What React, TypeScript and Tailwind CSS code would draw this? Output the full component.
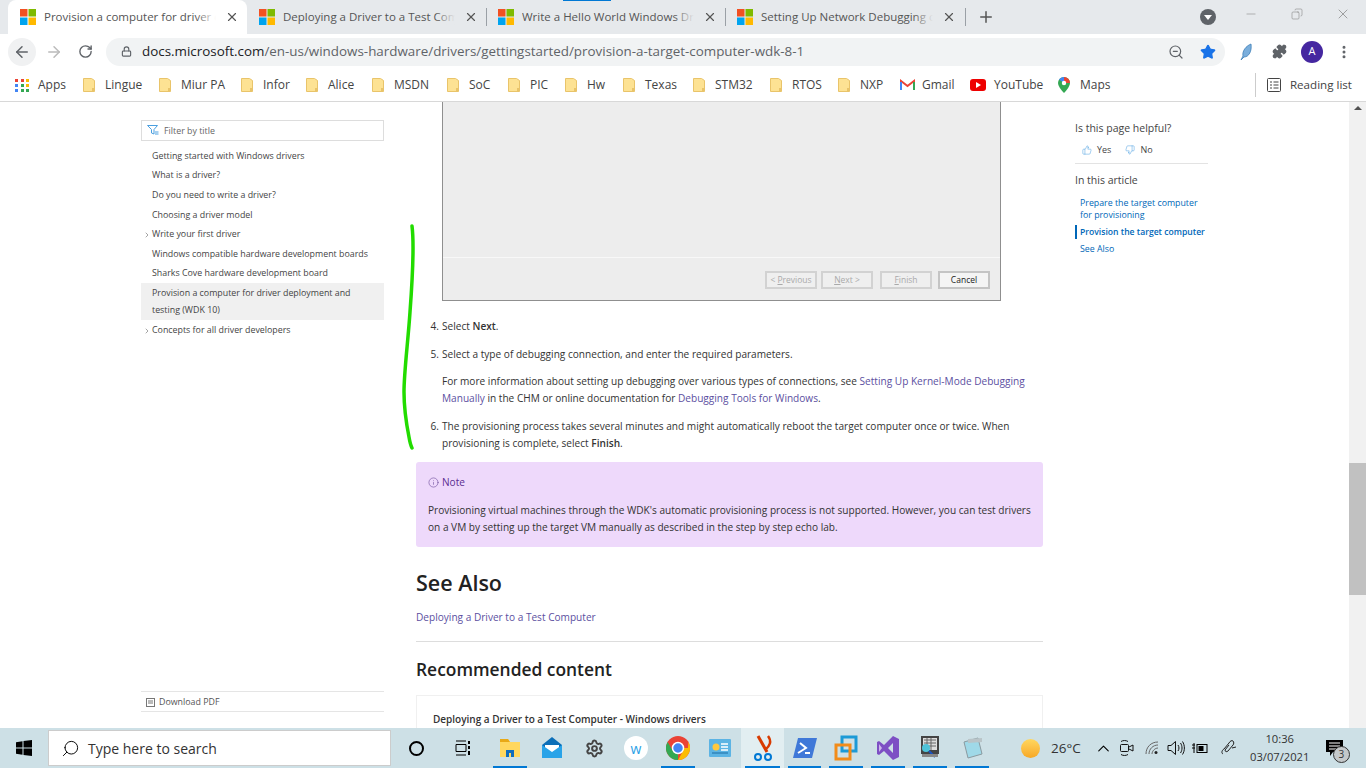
import { ArrowLeft, ArrowRight, RotateCw, Lock, ZoomOut, Star, Puzzle, MoreVertical, Plus, X, Minus, Copy, ChevronRight, ThumbsUp, ThumbsDown, Info, ChevronUp, Search, Settings } from "lucide-react";

const MsLogo = () => (
  <svg width="16" height="16" viewBox="0 0 16 16" className="shrink-0">
    <rect x="0" y="0" width="7.5" height="7.5" fill="#f25022" />
    <rect x="8.5" y="0" width="7.5" height="7.5" fill="#7fba00" />
    <rect x="0" y="8.5" width="7.5" height="7.5" fill="#00a4ef" />
    <rect x="8.5" y="8.5" width="7.5" height="7.5" fill="#ffb900" />
  </svg>
);

const Folder = () => (
  <svg width="12" height="14" viewBox="0 0 12 14" className="shrink-0">
    <path d="M0.5 0.5h8l3 2v11h-11z" fill="#fde293" stroke="#e9c46a" />
    <rect x="9" y="10" width="2" height="3" fill="#e9c46a" />
  </svg>
);

const tabs = [
  { title: "Provision a computer for driver d", active: true },
  { title: "Deploying a Driver to a Test Com", active: false, sep: false },
  { title: "Write a Hello World Windows Dri", active: false, sep: true },
  { title: "Setting Up Network Debugging c", active: false, sep: true },
];

const bookmarks = [
  ["Lingue", "w-[76px]"],
  ["Miur PA", "w-[82px]"],
  ["Infor", "w-[65px]"],
  ["Alice", "w-[66px]"],
  ["MSDN", "w-[75px]"],
  ["SoC", "w-[61px]"],
  ["PIC", "w-[57px]"],
  ["Hw", "w-[58px]"],
  ["Texas", "w-[70px]"],
  ["STM32", "w-[77px]"],
  ["RTOS", "w-[68px]"],
  ["NXP", "w-[62px]"],
];

const navItems = [
  { t: "Getting started with Windows drivers", cls: "h-[19px] mt-[6px]" },
  { t: "What is a driver?", cls: "h-[20px]" },
  { t: "Do you need to write a driver?", cls: "h-[20px]" },
  { t: "Choosing a driver model", cls: "h-[19px]" },
  { t: "Write your first driver", cls: "h-[20px]", arrow: true },
  { t: "Windows compatible hardware development boards", cls: "h-[20px]" },
  { t: "Sharks Cove hardware development board", cls: "h-[18px]" },
];

const Step = ({ n, children }: { n?: number; children: React.ReactNode }) => (
  <div className="flex">
    <span className="w-[26px] pr-[3px] text-right shrink-0">{n ? `${n}.` : ""}</span>
    <div className="w-[596px]">{children}</div>
  </div>
);

const DlgButton = ({ children, on, cls }: { children: React.ReactNode; on?: boolean; cls: string }) => (
  <div className={`h-[18px] w-[52px] border-2 flex items-center justify-center text-[8.5px] ${on ? "border-[#c4c4c4] bg-[#f4f4f4] text-[#222]" : "border-[#d2d2d2] bg-[#efefef] text-[#aaa]"} ${cls}`}>
    {children}
  </div>
);

const TrayIcon = ({ children, w = "w-[42px]", bar, cls = "" }: { children: React.ReactNode; w?: string; bar?: boolean; cls?: string }) => (
  <div className={`${w} h-full relative flex items-center justify-center shrink-0 ${cls}`}>
    {children}
    {bar && <div className="absolute bottom-0 left-[4px] right-[4px] h-[2px] bg-[#0078d4]" />}
  </div>
);

export default function App() {
  return (
    <div className="w-[1366px] h-[768px] flex flex-col overflow-hidden relative bg-white font-['Open_Sans',sans-serif] text-[#333]">
      {/* tab strip */}
      <div className="h-[34px] bg-[#e6e9ec] flex items-end pl-[8px] shrink-0 relative">
        <div className="absolute top-0 left-[563px] w-[48px] h-[1px] bg-[#0078d4]" />
        {tabs.map((tab) => (
          <div key={tab.title} className={`w-[239px] h-[34px] flex items-center pl-[12px] pr-[8px] relative shrink-0 ${tab.active ? "bg-white rounded-t-lg" : ""}`}>
            <MsLogo />
            <span className="ml-[8px] relative text-[11.5px] text-[#555] w-[172px] h-[16px] leading-[16px] overflow-hidden whitespace-nowrap">
              {tab.title}
              <span className={`absolute top-0 right-0 h-full w-[20px] bg-gradient-to-r from-transparent ${tab.active ? "to-white" : "to-[#e6e9ec]"}`} />
            </span>
            <X size={14} strokeWidth={2} className="text-[#555] ml-auto" />
            {tab.sep && <div className="absolute left-0 top-[8px] h-[18px] w-px bg-[#9aa0a6]" />}
          </div>
        ))}
        <div className="h-[34px] flex items-center pl-px">
          <div className="h-[18px] w-px bg-[#9aa0a6]" />
          <Plus size={18} strokeWidth={2} className="text-[#555] ml-[11px]" />
        </div>
        <div className="ml-auto flex items-center h-[34px]">
          <div className="w-[16px] h-[16px] rounded-full bg-[#5f6368] flex items-center justify-center mr-[28px]">
            <div className="w-0 h-0 border-l-[4px] border-r-[4px] border-t-[5px] border-l-transparent border-r-transparent border-t-white" />
          </div>
          <Minus size={14} strokeWidth={1} className="text-[#888] mr-[33px] mb-[6px]" />
          <Copy size={12} strokeWidth={1} className="text-[#777] mr-[32px] mb-[6px] -scale-x-100" />
          <X size={16} strokeWidth={1} className="text-[#777] mr-[15px] mb-[6px]" />
        </div>
      </div>

      {/* toolbar */}
      <div className="h-[35px] bg-white flex items-center shrink-0 pl-[8px]">
        <div className="w-[28px] h-[28px] rounded-full bg-[#f0f1f2] flex items-center justify-center">
          <ArrowLeft size={18} strokeWidth={2} className="text-[#5f6368]" />
        </div>
        <ArrowRight size={18} strokeWidth={2} className="text-[#bbb] ml-[9px]" />
        <RotateCw size={15} strokeWidth={2.2} className="text-[#5f6368] ml-[15px]" />
        <div className="ml-[13px] w-[1119px] h-[28px] rounded-full bg-[#f1f3f4] flex items-center pl-[15px] pr-[9px]">
          <Lock size={11} strokeWidth={2.5} className="text-[#5f6368]" />
          <span className="ml-[10px] text-[13.4px] text-[#202124] whitespace-nowrap">
            docs.microsoft.com<span className="text-[#5f6368]">/en-us/windows-hardware/drivers/gettingstarted/provision-a-target-computer-wdk-8-1</span>
          </span>
          <ZoomOut size={16} strokeWidth={1.8} className="text-[#5f6368] ml-auto" />
          <Star size={16} fill="#1a73e8" strokeWidth={2} className="text-[#1a73e8] ml-[16px]" />
        </div>
        <svg width="14" height="18" viewBox="0 0 14 18" className="ml-[15px]">
          <path d="M11 1C6 3 2 8 3 13l-2 4 3-3c5 0 8-6 7-13z" fill="#7aaedc" stroke="#3d7fb8" strokeWidth="0.8" />
        </svg>
        <Puzzle size={15} fill="#5f6368" className="text-[#5f6368] ml-[18px]" />
        <div className="ml-[14px] w-[22px] h-[22px] rounded-full bg-[#4527a0] text-white text-[11px] flex items-center justify-center">A</div>
        <MoreVertical size={16} strokeWidth={2.5} className="text-[#5f6368] ml-[13px]" />
      </div>

      {/* bookmarks */}
      <div className="h-[33px] bg-white flex items-center shrink-0 border-b border-[#d8d8d8] text-[12px] text-[#444]">
        <div className="w-[15px] ml-[15px] grid grid-cols-3 gap-[2px] shrink-0">
          {["#ea4335", "#ea4335", "#fbbc04", "#4285f4", "#34a853", "#fbbc04", "#4285f4", "#34a853", "#34a853"].map((c, i) => (
            <div key={i} className="w-[3px] h-[3px]" style={{ backgroundColor: c }} />
          ))}
        </div>
        <span className="ml-[8px] w-[45px] shrink-0">Apps</span>
        <div className="flex">
          {bookmarks.map(([b, w]) => (
            <div key={b} className={`${w} flex items-center shrink-0`}>
              <Folder />
              <span className="ml-[10px]">{b}</span>
            </div>
          ))}
        </div>
        <div className="flex items-center shrink-0">
          <svg width="15" height="12" viewBox="0 0 15 12">
            <path d="M1 11V2l6.5 5L14 2v9" fill="none" stroke="#ea4335" strokeWidth="2" />
            <path d="M1 11V3" stroke="#4285f4" strokeWidth="2" />
            <path d="M14 11V3" stroke="#34a853" strokeWidth="2" />
          </svg>
          <span className="ml-[7px] w-[38px]">Gmail</span>
          <div className="ml-[10px] w-[16px] h-[12px] rounded-[3px] bg-[#e00] flex items-center justify-center">
            <div className="w-0 h-0 border-l-[5px] border-t-[3px] border-b-[3px] border-l-white border-t-transparent border-b-transparent" />
          </div>
          <span className="ml-[8px] w-[48px]">YouTube</span>
          <svg width="12" height="16" viewBox="0 0 12 16" className="ml-[16px]">
            <path d="M6 0a6 6 0 0 1 6 6c0 4-6 10-6 10S0 10 0 6a6 6 0 0 1 6-6z" fill="#34a853" />
            <path d="M1 2.5A6 6 0 0 1 6 0v6z" fill="#4285f4" />
            <path d="M6 0a6 6 0 0 1 6 6H6z" fill="#ea4335" />
            <circle cx="6" cy="6" r="2.2" fill="#fff" />
          </svg>
          <span className="ml-[10px]">Maps</span>
        </div>
        <div className="ml-auto flex items-center mr-[14px]">
          <div className="w-px h-[24px] bg-[#ccc] mr-[11px]" />
          <svg width="14" height="14" viewBox="0 0 14 14" fill="none" stroke="#444">
            <rect x="0.5" y="0.5" width="13" height="13" rx="1" />
            <path d="M3 4h2M3 7h2M3 10h2M6.500 4h5M6.500 7h5M6.500 10h5" />
          </svg>
          <span className="ml-[9px] text-[11.6px]">Reading list</span>
        </div>
      </div>

      {/* page */}
      <div className="flex-1 flex min-h-0 overflow-hidden text-[10.1px] relative">
        {/* left nav */}
        <div className="w-[243px] ml-[141px] shrink-0 flex flex-col pt-[18px] text-[8.85px] text-[#444]">
          <div className="h-[21px] border border-[#ddd] flex items-center pl-[5px] pt-[2px] text-[#666]">
            <svg width="12" height="11" viewBox="0 0 12 11" fill="none" stroke="#4a9fe0" className="-mt-[2px]">
              <path d="M0.500 0.500h10L7 4.500V9L4.500 8V4.500z" />
              <path d="M8 7h3.500M8 9h3.500" />
            </svg>
            <span className="ml-[5px]">Filter by title</span>
          </div>
          {navItems.map((it) => (
            <div key={it.t} className={`${it.cls} flex items-center relative pl-[11px] whitespace-nowrap`}>
              {it.arrow && <ChevronRight size={8} className="absolute left-[2px] text-[#777]" />}
              {it.t}
            </div>
          ))}
          <div className="bg-[#f0f0f0] pl-[11px] pr-[20px] pt-[2px] h-[37px] leading-[17px]">
            Provision a computer for driver deployment and testing (WDK 10)
          </div>
          <div className="h-[21px] flex items-center relative pl-[11px]">
            <ChevronRight size={8} className="absolute left-[2px] text-[#777]" />
            Concepts for all driver developers
          </div>
          <div className="mt-auto mb-[16px] h-[21px] border-y border-[#e5e5e5] flex items-center pl-[5px] pt-[2px] text-[#555]">
            <svg width="9" height="9" viewBox="0 0 9 9" fill="none" stroke="#777"><rect x="0.5" y="0.5" width="8" height="8" /><path d="M2 3h5M2 5h5" /></svg>
            <span className="ml-[4px]">Download PDF</span>
          </div>
        </div>

        {/* article */}
        <div className="ml-[32px] w-[627px] shrink-0">
          <div className="ml-[26px] w-[559px] h-[199px] bg-[#ededed] border-x-[1.5px] border-b-[1.5px] border-[#8f8f8f] flex flex-col">
            <div className="h-[156px] border-b-[1.5px] border-[#f8f8f8] shrink-0" />
            <div className="flex justify-end pt-[13px] pr-[10px]">
              <DlgButton cls=""><span>&lt; <u>P</u>revious</span></DlgButton>
              <DlgButton cls="ml-[4px]"><span><u>N</u>ext &gt;</span></DlgButton>
              <DlgButton cls="ml-[7px]"><span><u>F</u>inish</span></DlgButton>
              <DlgButton cls="ml-[6px]" on>Cancel</DlgButton>
            </div>
          </div>
          <div className="leading-[17px] mt-[17px] text-[#333]">
            <Step n={4}>Select <b className="font-semibold">Next</b>.</Step>
            <div className="mt-[11px]"><Step n={5}>Select a type of debugging connection, and enter the required parameters.</Step></div>
            <div className="mt-[10px]">
              <Step>
                For more information about setting up debugging over various types of connections, see <span className="text-[#5c4f9f]">Setting Up Kernel-Mode Debugging Manually</span> in the CHM or online documentation for <span className="text-[#5c4f9f]">Debugging Tools for Windows</span>.
              </Step>
            </div>
            <div className="mt-[11px]">
              <Step n={6}>
                The provisioning process takes several minutes and might automatically reboot the target computer once or twice. When provisioning is complete, select <b className="font-semibold">Finish</b>.
              </Step>
            </div>
          </div>
          <div className="mt-[10px] h-[85px] rounded-[3px] bg-[#eed9fb] px-[12px] pt-[12px] leading-[17px] text-[#333]">
            <div className="flex items-center">
              <Info size={11} strokeWidth={1.3} className="text-[#6b4b9a]" />
              <span className="ml-[3px] text-[#5c2d91]">Note</span>
            </div>
            <p className="mt-[11px]">Provisioning virtual machines through the WDK's automatic provisioning process is not supported. However, you can test drivers on a VM by setting up the target VM manually as described in the step by step echo lab.</p>
          </div>
          <h2 className="mt-[21px] text-[21.5px] leading-[30px] font-semibold text-[#222]">See Also</h2>
          <div className="mt-[11px] leading-[17px] text-[#5c4f9f]">Deploying a Driver to a Test Computer</div>
          <div className="mt-[15px] border-t border-[#ddd]" />
          <h3 className="mt-[15px] text-[17.4px] leading-[24px] font-semibold text-[#222]">Recommended content</h3>
          <div className="mt-[14px] border border-[#f0f0f0] h-[60px] px-[16px] pt-[16px] text-[10px] font-semibold text-[#333]">Deploying a Driver to a Test Computer - Windows drivers</div>
        </div>

        {/* right column */}
        <div className="ml-[32px] w-[133px] shrink-0 pt-[19px] text-[10.5px]">
          <div className="leading-[15px] text-[#444]">Is this page helpful?</div>
          <div className="flex items-center mt-[7px] ml-[7px] text-[9px] text-[#444] h-[14px]">
            <ThumbsUp size={10} strokeWidth={1.2} className="text-[#4a9fe0]" />
            <span className="ml-[5px]">Yes</span>
            <ThumbsDown size={10} strokeWidth={1.2} className="text-[#4a9fe0] ml-[14px]" />
            <span className="ml-[5px]">No</span>
          </div>
          <div className="mt-[6px] border-t border-[#e3e3e3]" />
          <div className="mt-[9px] leading-[15px] text-[#444]">In this article</div>
          <div className="mt-[9px] pl-[5px] text-[8.8px] leading-[12px] text-[#0067b8]">
            Prepare the target computer for provisioning
          </div>
          <div className="mt-[4px] border-l-2 border-[#0067b8] pl-[3px] text-[8.6px] leading-[14px] font-semibold text-[#0067b8] whitespace-nowrap">Provision the target computer</div>
          <div className="mt-[3px] pl-[5px] text-[8.8px] leading-[14px] text-[#0067b8]">See Also</div>
        </div>

        {/* scrollbar */}
        <div className="ml-auto w-[17px] bg-[#f1f1f1] flex flex-col items-center shrink-0">
          <div className="mt-[4px] w-0 h-0 border-l-[4px] border-r-[4px] border-b-[4px] border-l-transparent border-r-transparent border-b-[#505050]" />
          <div className="mt-[353px] w-full h-[132px] bg-[#c1c1c1]" />
        </div>

        {/* green pen stroke drawn over the page */}
        <svg className="absolute left-[400px] top-[120px]" width="18" height="232" viewBox="0 0 18 232" fill="none">
          <path d="M12 4C14 20 13 50 10 90C8 120 4 150 4 170C4 190 7 205 9 215C10 221 11 224 12 226" stroke="#22dc00" strokeWidth="3.5" strokeLinecap="round" />
        </svg>
      </div>

      {/* taskbar */}
      <div className="h-[40px] bg-[#cde0e6] flex items-center shrink-0 relative">
        <div className="w-[48px] h-full flex items-center justify-center">
          <svg width="16" height="16" viewBox="0 0 16 16" fill="#000">
            <path d="M0 2.200 6.500 1.300V7.500H0zM7.500 1.100 16 0V7.500H7.500zM0 8.500H6.500V14.700L0 13.800zM7.500 8.500H16V16L7.500 14.900z" />
          </svg>
        </div>
        <div className="w-[343px] h-[36px] bg-white border border-[#ccc] flex items-center pl-[12px] text-[14px] text-[#333]">
          <Search size={19} strokeWidth={1.2} className="text-black -scale-x-100" />
          <span className="ml-[8px]">Type here to search</span>
        </div>
        <div className="flex h-full ml-[4px]">
          <TrayIcon><div className="w-[15px] h-[15px] rounded-full border-[2.5px] border-black" /></TrayIcon>
          <TrayIcon w="w-[52px]">
            <svg width="16" height="16" viewBox="0 0 16 16" fill="none" stroke="#000">
              <path d="M1 1h10M1 15h10M1 4.500h10v7H1z" />
              <path d="M14 1v3M14 6v3M14 11v4" strokeWidth="2" />
            </svg>
          </TrayIcon>
          <TrayIcon bar>
            <svg width="22" height="20" viewBox="0 0 22 20">
              <path d="M1 1h8l2 3h10v15H1z" fill="#ffd75e" />
              <path d="M1 1h8l2 3H1z" fill="#e8a916" />
              <rect x="7" y="12" width="8" height="7" fill="#0f6cbd" />
              <rect x="10" y="15" width="2" height="4" fill="#ffd75e" />
            </svg>
          </TrayIcon>
          <TrayIcon>
            <svg width="24" height="24" viewBox="0 0 24 24">
              <path d="M12 1l10 8v13H2V9z" fill="#0c6fb8" />
              <path d="M5 9h14v7l-7 4-7-4z" fill="#fff" />
              <path d="M2 9l10 7 10-7v13H2z" fill="#29a3e8" />
            </svg>
          </TrayIcon>
          <TrayIcon><Settings size={19} strokeWidth={2.5} className="text-[#444]" /></TrayIcon>
          <TrayIcon>
            <div className="w-[24px] h-[24px] rounded-full bg-white text-[#2aa1e6] text-[14px] flex items-center justify-center">w</div>
          </TrayIcon>
          <TrayIcon bar>
            <svg width="24" height="24" viewBox="0 0 24 24">
              <circle cx="12" cy="12" r="12" fill="#ea4335" />
              <path d="M12 24a12 12 0 0 1-10.400-18L7 15l5 3z" fill="#34a853" />
              <path d="M22.400 6A12 12 0 0 1 12 24l5-9-2-3h7z" fill="#fbbc04" />
              <circle cx="12" cy="12" r="5.500" fill="#4285f4" stroke="#fff" strokeWidth="1.500" />
            </svg>
          </TrayIcon>
          <TrayIcon>
            <svg width="22" height="18" viewBox="0 0 22 18">
              <rect width="22" height="18" rx="1" fill="#5cb4e4" />
              <circle cx="7" cy="8" r="3.500" fill="#ffc83d" />
              <path d="M12 5h7M12 8h7M12 11h7" stroke="#fff" strokeWidth="1.500" />
              <path d="M3 14h16" stroke="#1d6fa5" />
            </svg>
          </TrayIcon>
          <TrayIcon bar w="w-[43px]" cls="bg-[#e2eef1]">
            <svg width="22" height="28" viewBox="0 0 22 28" fill="none">
              <path d="M6 2l9 16" stroke="#d83b01" strokeWidth="3" />
              <path d="M16 2c4 5 2 10-3 14" stroke="#d83b01" strokeWidth="2.500" />
              <circle cx="6" cy="23" r="3" stroke="#0078d4" strokeWidth="2" />
              <circle cx="16" cy="23" r="3" stroke="#0078d4" strokeWidth="2" />
            </svg>
          </TrayIcon>
          <TrayIcon bar w="w-[41px]">
            <svg width="24" height="20" viewBox="0 0 24 20">
              <path d="M5 0h19l-5 20H0z" fill="#3f78d8" />
              <path d="M7 5l6 5-8 5" fill="none" stroke="#fff" strokeWidth="2" />
              <path d="M12 15h5" stroke="#fff" strokeWidth="2" />
            </svg>
          </TrayIcon>
          <TrayIcon bar w="w-[42px]">
            <svg width="24" height="26" viewBox="0 0 24 26" fill="none">
              <rect x="8" y="2" width="14" height="14" stroke="#1c9ad6" strokeWidth="3" />
              <rect x="2" y="10" width="14" height="14" stroke="#f28c1a" strokeWidth="3" />
            </svg>
          </TrayIcon>
          <TrayIcon bar w="w-[42px]">
            <svg width="24" height="26" viewBox="0 0 24 26">
              <path d="M17 1l6 3v18l-6 3-9-9-5 4-2-1V7l2-1 5 4zM17 8l-5 5 5 5z" fill="#7d4fc4" fillRule="evenodd" />
              <path d="M3 9v8l3-4z" fill="#cdb7ec" />
            </svg>
          </TrayIcon>
          <TrayIcon bar w="w-[42px]">
            <svg width="22" height="26" viewBox="0 0 22 26">
              <rect x="2" y="1" width="18" height="18" fill="#444" />
              <rect x="4" y="3" width="14" height="12" fill="#ddd" />
              <path d="M5 5h12M5 8h12M5 11h12M8 3v12M12 3v12" stroke="#666" />
              <circle cx="7" cy="13" r="4" fill="#4fc3d9" />
              <path d="M10 16l6 6" stroke="#1a53c4" strokeWidth="2" />
              <rect x="3" y="19" width="16" height="3" fill="#888" />
            </svg>
          </TrayIcon>
          <TrayIcon bar w="w-[42px]">
            <svg width="24" height="24" viewBox="0 0 24 24">
              <path d="M4 6l14-4 4 16-14 4z" fill="#9fd9e8" stroke="#8a9aa0" />
              <path d="M8 3l14-1v4L8 7z" fill="#b9c4c8" />
            </svg>
          </TrayIcon>
        </div>
        <div className="ml-[28px] w-[19px] h-[19px] rounded-full bg-gradient-to-b from-[#ffd75e] to-[#f7a823] shrink-0" />
        <span className="ml-[11px] text-[13.5px] text-[#333] shrink-0">26°C</span>
        <ChevronUp size={19} strokeWidth={1.4} className="ml-[13px] text-black shrink-0" />
        {/* camera with the two arcs above and below it */}
        <svg width="16" height="18" viewBox="0 0 16 18" fill="none" stroke="#111" className="ml-[6px] shrink-0">
          <rect x="1.500" y="5.500" width="8" height="7" rx="1" />
          <path d="M10 8l4-2v6l-4-2" />
          <path d="M2 2.500c2-1.300 5-1.300 7 0M2 15.500c2 1.300 5 1.300 7 0" />
        </svg>
        <svg width="16" height="14" viewBox="0 0 16 14" fill="none" stroke="#666" className="ml-[10px] shrink-0">
          <path d="M1 13C1 6 6 1 13 1M4 13c0-5 4-9 9-9M7 13c0-3 3-6 6-6" />
          <circle cx="11" cy="11.500" r="1.500" fill="#222" stroke="none" />
        </svg>
        <svg width="18" height="16" viewBox="0 0 18 16" fill="none" stroke="#111" className="ml-[6px] shrink-0">
          <path d="M1 5.500h3L8.500 1.500v13L4 10.500H1z" />
          <path d="M11 5c1.300 1.800 1.300 4.200 0 6M13.500 3c2 3 2 7 0 10M15.500 1.500c2.500 4 2.500 9 0 13" />
        </svg>
        <svg width="16" height="12" viewBox="0 0 16 12" fill="none" stroke="#000" className="ml-[7px] shrink-0">
          <rect x="5" y="2.500" width="10" height="8" />
          <rect x="6.500" y="4" width="5" height="5" fill="#000" stroke="none" />
          <path d="M0 3h3M0 6h3M2 1v6M2 7v4" />
        </svg>
        <svg width="18" height="18" viewBox="0 0 18 18" fill="none" stroke="#222" className="ml-[12px] shrink-0">
          <path d="M3 15c-2-1-1-4 1-5l5-6c1-2 3-3 4-2s1 3 0 4l-5 6c-1 1-3 1-3-1l4-5" />
          <path d="M12 9l4-1" />
        </svg>
        <div className="ml-[12px] w-[60px] text-center text-[11.2px] leading-[18px] text-[#333] shrink-0">
          10:36<br />03/07/2021
        </div>
        <div className="ml-[16px] relative shrink-0">
          <svg width="17" height="16" viewBox="0 0 17 16"><path d="M0 0h17v12H7l-3 4v-4H0z" fill="#000" /><path d="M3 3h11M3 6h11M3 9h7" stroke="#fff" /></svg>
          <div className="absolute left-[7px] top-[6px] w-[17px] h-[17px] rounded-full bg-[#c4c8ca] border border-[#333] text-[10px] flex items-center justify-center">3</div>
        </div>
      </div>
    </div>
  );
}
